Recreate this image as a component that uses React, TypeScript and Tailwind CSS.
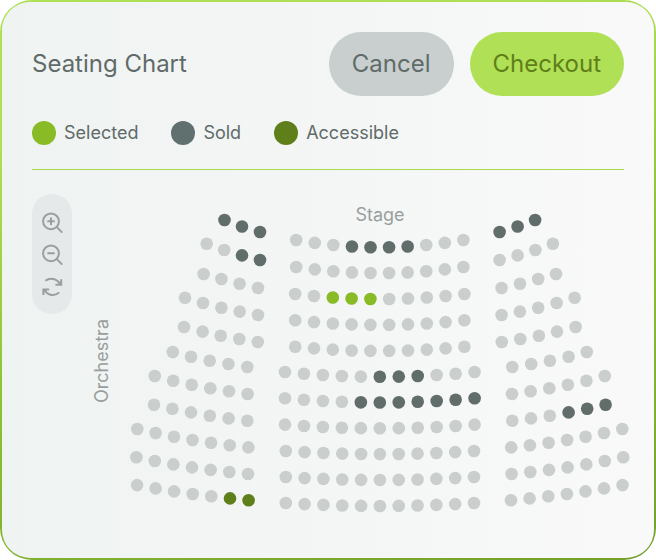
import React, { useState } from 'react';

type SeatStatus = 'open' | 'selected' | 'sold' | 'accessible';

const seatFill: Record<SeatStatus, string> = {
  open: 'fill-[#cacfce]',
  selected: 'fill-[#88bb25]',
  sold: 'fill-[#606d6a]',
  accessible: 'fill-[#5f7f1a]',
};

const legend = [
  { label: 'Selected', color: 'bg-[#88bb25]' },
  { label: 'Sold', color: 'bg-[#60706e]' },
  { label: 'Accessible', color: 'bg-[#5f7f1a]' },
];

// Side section, one list of [x, y] per row, outermost seat first.
// The right section is the same shape mirrored around the aisle centre.
const sideRows: [number, number][][] = [
  [[96.5, 26], [114, 32.5], [132, 38]],
  [[78.7, 49.7], [96.2, 56], [114, 61.4], [132, 66]],
  [[75.6, 80], [93.4, 85], [111.6, 89.7], [130, 94]],
  [[57, 103.8], [75, 109], [93.4, 113.7], [111.7, 117.6], [130, 121]],
  [[56, 133], [74.6, 137.6], [92.7, 141.7], [111.3, 145], [129.8, 148]],
  [[44.8, 158], [63, 162.7], [81.7, 166.7], [100.4, 170], [119.3, 173]],
  [[26.8, 182], [45.2, 186.7], [63.7, 190.7], [82.3, 194.2], [101, 197.3], [119.6, 200]],
  [[26, 210.7], [44.4, 214.7], [63, 218.4], [81.8, 221.7], [100.6, 224.4], [119.3, 226.7]],
  [[9.3, 235], [27.6, 239], [46, 242.7], [64.5, 246], [83, 248.7], [101.7, 251.2], [120.4, 253.4]],
  [[8.4, 263.3], [26.8, 267], [45.3, 270.4], [64, 273.4], [82.6, 275.9], [101.3, 278], [120, 280]],
  [[9.1, 291.1], [27.6, 294.4], [46.1, 297.4], [64.7, 300], [83.3, 302.3], [102, 304.4], [120.6, 306.2]],
];

const MIRROR = 503.6;

// Centre section: rows bow away from the stage.
const centerRows = [
  { seats: 10, from: 168.2, to: 335.4, y: 46, bow: 7.3 },
  { seats: 10, from: 168.2, to: 335.4, y: 73, bow: 6.1 },
  { seats: 10, from: 167.2, to: 336.4, y: 100, bow: 5 },
  { seats: 10, from: 167.2, to: 336.4, y: 126.3, bow: 4.6 },
  { seats: 10, from: 167.2, to: 336.4, y: 152.7, bow: 4.2 },
  { seats: 11, from: 157, to: 346.6, y: 178, bow: 4.8 },
  { seats: 11, from: 157, to: 346.6, y: 204.2, bow: 4.3 },
  { seats: 11, from: 157, to: 346.6, y: 230.6, bow: 3.7 },
  { seats: 11, from: 157.8, to: 346, y: 257, bow: 3.1 },
  { seats: 11, from: 157.8, to: 346, y: 283, bow: 3 },
  { seats: 11, from: 157.8, to: 346, y: 309, bow: 3 },
];

// section-row-seat
const taken: Record<string, SeatStatus> = {
  'L-0-0': 'sold', 'L-0-1': 'sold', 'L-0-2': 'sold',
  'L-1-2': 'sold', 'L-1-3': 'sold',
  'L-10-5': 'accessible', 'L-10-6': 'accessible',
  'C-0-3': 'sold', 'C-0-4': 'sold', 'C-0-5': 'sold', 'C-0-6': 'sold',
  'C-2-2': 'selected', 'C-2-3': 'selected', 'C-2-4': 'selected',
  'C-5-5': 'sold', 'C-5-6': 'sold', 'C-5-7': 'sold',
  'C-6-4': 'sold', 'C-6-5': 'sold', 'C-6-6': 'sold', 'C-6-7': 'sold',
  'C-6-8': 'sold', 'C-6-9': 'sold', 'C-6-10': 'sold',
  'R-0-0': 'sold', 'R-0-1': 'sold', 'R-0-2': 'sold',
  'R-7-0': 'sold', 'R-7-1': 'sold', 'R-7-2': 'sold',
};

const Seat: React.FC<{ id: string; x: number; y: number }> = ({ id, x, y }) => (
  <circle cx={x} cy={y} r={6.3} className={seatFill[taken[id] ?? 'open']} />
);

const SeatMap: React.FC<{ zoom: number }> = ({ zoom }) => {
  const w = 504 / zoom;
  const h = 334 / zoom;

  return (
    <svg
      viewBox={`${(504 - w) / 2} ${(334 - h) / 2} ${w} ${h}`}
      className="block w-full"
      role="img"
      aria-label="Orchestra seats"
    >
      {sideRows.map((row, r) =>
        row.map(([x, y], s) => (
          <g key={`${r}-${s}`}>
            <Seat id={`L-${r}-${s}`} x={x} y={y} />
            <Seat id={`R-${r}-${s}`} x={MIRROR - x} y={y} />
          </g>
        ))
      )}
      {centerRows.map(({ seats, from, to, y, bow }, r) =>
        [...Array(seats)].map((_, s) => {
          const t = (2 * s) / (seats - 1) - 1;
          return (
            <Seat
              key={`${r}-${s}`}
              id={`C-${r}-${s}`}
              x={from + ((to - from) * s) / (seats - 1)}
              y={y + bow * (1 - t * t)}
            />
          );
        })
      )}
    </svg>
  );
};

const ToolButton: React.FC<{ label: string; onClick: () => void; children: React.ReactNode }> = ({
  label,
  onClick,
  children,
}) => (
  <button type="button" aria-label={label} onClick={onClick} className="size-6 cursor-pointer">
    <svg viewBox="0 0 24 24" fill="none" stroke="currentColor" strokeWidth="2" className="size-6">
      {children}
    </svg>
  </button>
);

const App: React.FC = () => {
  const [zoom, setZoom] = useState(1);

  return (
    <main className="rounded-[32px] bg-linear-[165deg] from-[#aee056] from-20% via-[#8dc231] via-55% to-[#72a02a] p-0.5 font-['Inter',sans-serif] text-[#606b69]">
      <div className="rounded-[28px] bg-linear-to-r from-[#eff3f2] to-[#f9f9f9] p-[30px]">
        <header className="flex items-center justify-between">
          <h1 className="text-2xl">Seating Chart</h1>
          <div className="flex gap-4">
            <button type="button" className="h-16 rounded-full bg-[#c8cfce] px-[23px] text-2xl">
              Cancel
            </button>
            <button type="button" className="h-16 rounded-full bg-[#b0e056] px-[23px] text-2xl text-[#5f7f1a]">
              Checkout
            </button>
          </div>
        </header>

        <ul className="mt-[25px] flex gap-[33px]">
          {legend.map(({ label, color }) => (
            <li key={label} className="flex items-center gap-2 text-lg/6">
              <span className={`size-6 rounded-full ${color}`} />
              {label}
            </li>
          ))}
        </ul>

        <hr className="mt-6 h-px border-0 bg-[#a9da48]" />

        <section className="-mr-2 mt-6 flex items-start text-lg/5 text-[#989f9e]">
          <div className="flex w-10 shrink-0 flex-col items-center gap-2 rounded-full bg-[#e6e9e9] py-4">
            <ToolButton label="Zoom in" onClick={() => setZoom(zoom * 1.25)}>
              <circle cx="11" cy="11.3" r="7.9" />
              <path d="M16.6 16.9 22.2 22.6M11 7.6V15M7.3 11.3h7.4" />
            </ToolButton>
            <ToolButton label="Zoom out" onClick={() => setZoom(Math.max(1, zoom / 1.25))}>
              <circle cx="11" cy="11.3" r="7.9" />
              <path d="M16.6 16.9 22.2 22.6M7.3 11.3h7.4" />
            </ToolButton>
            <ToolButton label="Reset view" onClick={() => setZoom(1)}>
              <path d="M5.4 6.8C9.8 3.4 16.8 4.2 20.2 10.2M21.2 5.2v5.6h-5.8" />
              <path d="M19.2 18.4C14.8 22.6 7.6 21.8 4.2 15.8M3.4 21v-5.6h5.8" />
            </ToolButton>
          </div>
          <h2 className="ml-5 mr-4 rotate-180 self-center [writing-mode:vertical-rl]">Orchestra</h2>
          <div className="relative min-w-0 flex-1">
            <p className="absolute left-1/2 top-[11px] -translate-x-1/2">Stage</p>
            <SeatMap zoom={zoom} />
          </div>
        </section>
      </div>
    </main>
  );
};

export default App;
